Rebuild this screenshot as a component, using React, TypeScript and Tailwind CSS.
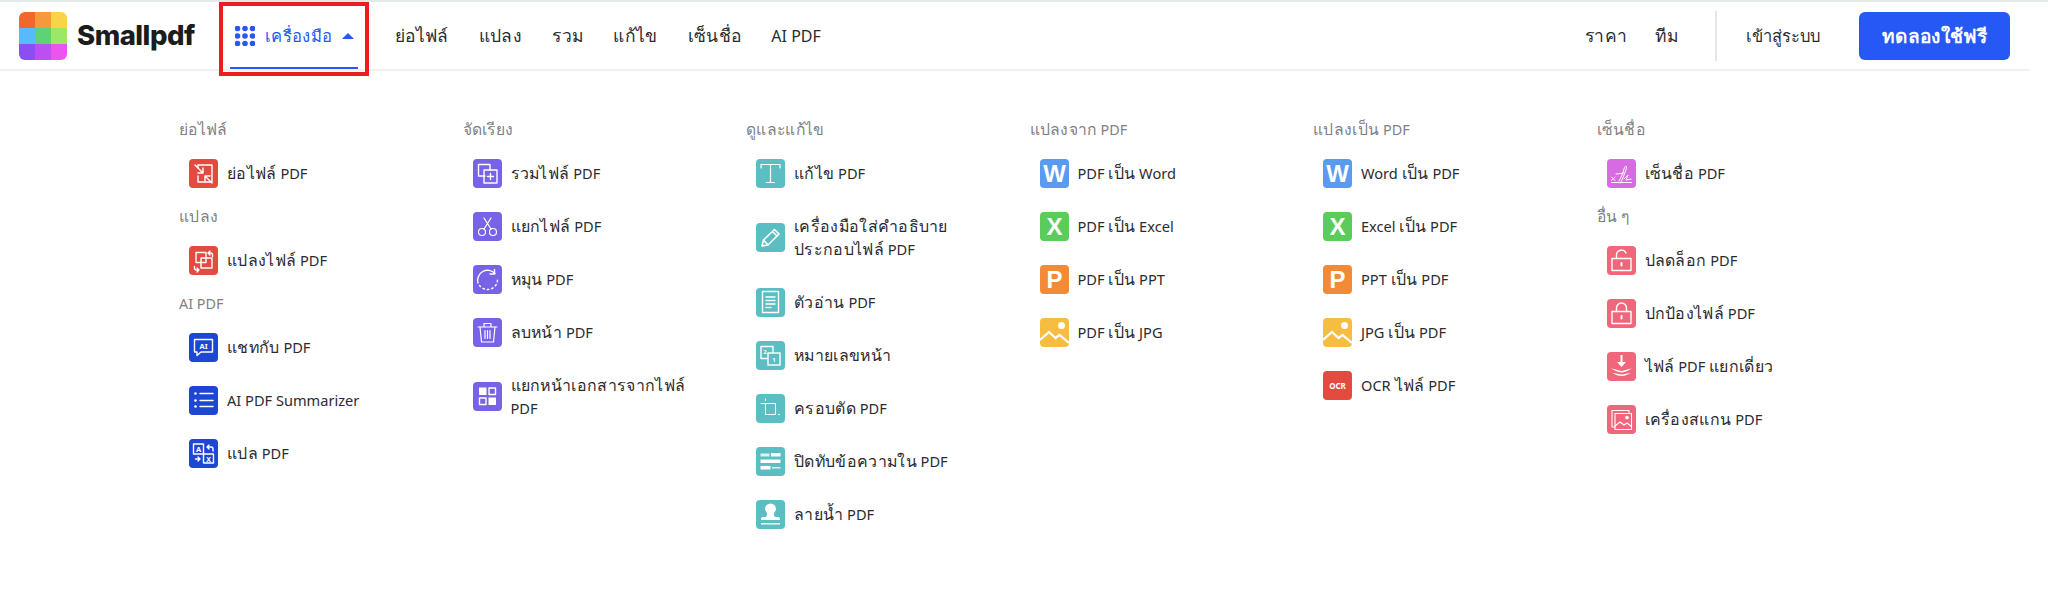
import React from "react";

const line = {
  fill: "none",
  stroke: "white",
  strokeWidth: 1.4,
  strokeLinecap: "round" as const,
  strokeLinejoin: "round" as const,
};

const glyphs: Record<string, React.ReactNode> = {
  compress: (
    <g {...line}>
      <path d="M9 6h14v17H13M9 6v3M9 17v6h4" />
      <path d="M6 6l8 8M14 9v5H9" />
      <path d="M23 24l-7-7M16 22v-5h5" />
    </g>
  ),
  convert: (
    <g {...line}>
      <rect x="7" y="6.5" width="10" height="10" />
      <rect x="12" y="12" width="11" height="10" />
      <path d="M19 7h2.5a2 2 0 012 2v1.5M21 5l-2 2 2 2" />
      <path d="M10 24H7.5a2 2 0 01-2-2v-1.5M8 22l2 2-2 2" />
    </g>
  ),
  chat: (
    <g>
      <path {...line} d="M5.5 6.5h18v12.5H12l-4 3.5V19H5.5z" />
      <text x="14.5" y="15.5" fontSize="7.5" fontWeight="700" fill="white" textAnchor="middle" fontFamily="Noto Sans">
        AI
      </text>
    </g>
  ),
  list: (
    <g>
      <path {...line} strokeWidth={1.5} d="M11 7.5h13M11 14.5h13M11 20.5h13" />
      <circle cx="6.5" cy="7.5" r="1.3" fill="white" />
      <circle cx="6.5" cy="14.5" r="1.3" fill="white" />
      <circle cx="6.5" cy="20.5" r="1.3" fill="white" />
    </g>
  ),
  translate: (
    <g>
      <rect {...line} x="4.5" y="5" width="10" height="10" />
      <rect {...line} x="14.5" y="15" width="10" height="9" />
      <text x="9.5" y="13" fontSize="7.5" fontWeight="700" fill="white" textAnchor="middle" fontFamily="Noto Sans">
        A
      </text>
      <text x="19.5" y="22.5" fontSize="7" fontWeight="700" fill="white" textAnchor="middle" fontFamily="Noto Sans">
        X
      </text>
      <path {...line} d="M18 8h4a2 2 0 012 2v2M20 6l-2 2 2 2" />
      <path {...line} d="M11 20H6.500M9 18l2 2-2 2" />
    </g>
  ),
  merge: (
    <g {...line}>
      <path d="M12 17H5.500V5.500H17V11" />
      <rect x="11" y="11" width="13" height="13" />
      <path d="M17.500 14.500v6M14.500 17.500h6" />
    </g>
  ),
  split: (
    <g {...line} strokeWidth={1.2}>
      <circle cx="9" cy="20" r="3.500" />
      <circle cx="20" cy="20" r="3.500" />
      <path d="M11 17L18 6M18 17L11 6" />
    </g>
  ),
  rotate: (
    <g {...line}>
      <path d="M22 8.500A10 10 0 005 18" />
      <path d="M21.500 4.500v4.500H17" />
      <path strokeDasharray="1.5 3" d="M6.500 20.500A10 10 0 0024.500 14" />
    </g>
  ),
  trash: (
    <g {...line} strokeWidth={1.2}>
      <path d="M5 9h19M11 9V5.500h7V9" />
      <path d="M7 9l1.500 15h12L22 9" />
      <path d="M12 12.500v8M14.500 12.500v8M17 12.500v8" />
    </g>
  ),
  pages: (
    <g>
      <rect x="6" y="5.500" width="7.500" height="7.500" fill="white" />
      <rect {...line} x="16" y="6" width="6.500" height="6.500" />
      <rect {...line} x="6.500" y="16" width="6.500" height="6.500" />
      <rect x="15.500" y="15.500" width="7.500" height="7.500" fill="white" />
    </g>
  ),
  text: (
    <g {...line} strokeWidth={1.2}>
      <path d="M5 9V5.500h19V9M14.500 5.500v18M10.500 23.500h8" />
    </g>
  ),
  pencil: (
    <g {...line} strokeWidth={1.6}>
      <path d="M6 23l1.500-6L18.500 6.500l4.500 4.500L12 22z" />
      <path d="M16.500 8.500l4.500 4.500M7.500 17l4.500 5" />
    </g>
  ),
  doc: (
    <g>
      <rect {...line} x="6.500" y="3.500" width="16" height="21" />
      <path {...line} d="M10 9h9M10 12.500h9M10 16h9M10 19.500h5" />
    </g>
  ),
  number: (
    <g>
      <rect {...line} x="5" y="5.500" width="12" height="12" />
      <rect x="12" y="12" width="12" height="12" fill="#5bbec3" stroke="white" strokeWidth="1.4" />
      <text x="9" y="12.500" fontSize="6" fontWeight="700" fill="white" textAnchor="middle" fontFamily="Noto Sans">
        2
      </text>
      <text x="18" y="21" fontSize="6" fontWeight="700" fill="white" textAnchor="middle" fontFamily="Noto Sans">
        1
      </text>
    </g>
  ),
  crop: (
    <g {...line} strokeWidth={1.1}>
      <path d="M9.500 9.500v11h10M9.500 5v1.500M5 9.500h14.500v11M22.500 20.500h1" />
    </g>
  ),
  redact: (
    <g>
      <rect x="4.500" y="6.500" width="9" height="3" fill="white" opacity="0.8" />
      <rect x="15" y="6" width="9.500" height="3.500" fill="white" />
      <rect x="4.500" y="12.500" width="20" height="3.500" fill="white" />
      <rect x="4.500" y="19" width="10" height="3.500" fill="white" />
      <rect x="16" y="20" width="8.500" height="1.500" fill="white" opacity="0.8" />
    </g>
  ),
  stamp: (
    <g fill="white">
      <path d="M14.500 3.500a5.500 5.500 0 00-5.500 5.500c0 2 1.800 3 2 4.500.2 1.200-.3 3-1.300 3.500H7a2 2 0 00-2 2v1h19v-1a2 2 0 00-2-2h-2.700c-1-.5-1.500-2.300-1.300-3.500.2-1.500 2-2.500 2-4.500a5.500 5.500 0 00-5.500-5.500z" />
      <rect x="5" y="23" width="19" height="1.500" />
    </g>
  ),
  w: (
    <text x="14.500" y="22.500" fontSize="24" fontWeight="700" fill="white" textAnchor="middle" fontFamily="Liberation Sans">
      W
    </text>
  ),
  x: (
    <text x="14.500" y="23" fontSize="24" fontWeight="700" fill="white" textAnchor="middle" fontFamily="Liberation Sans">
      X
    </text>
  ),
  p: (
    <text x="14.500" y="23" fontSize="24" fontWeight="700" fill="white" textAnchor="middle" fontFamily="Liberation Sans">
      P
    </text>
  ),
  image: (
    <g>
      <circle cx="21.500" cy="7.500" r="3.500" fill="white" />
      <path fill="none" stroke="white" strokeWidth="2.200" d="M0 22l9-8 6.500 6 4-3 9.500 8" />
    </g>
  ),
  ocr: (
    <text x="14.500" y="18" fontSize="8" fontWeight="700" fill="white" textAnchor="middle" fontFamily="Noto Sans">
      OCR
    </text>
  ),
  sign: (
    <g {...line} strokeWidth={1}>
      <path d="M4.500 18l3.500 3.500M8 18l-3.500 3.500" />
      <path d="M12 22c2-3 4-8 5-12 .6-2.500 2.500-4 2.500-2 0 3-4 12-6 16" />
      <path d="M9 15c3 0 6-1 8-1M17 20l4-4-2 5c2 0 4-1 5-1" />
      <path d="M4.500 23.500h20" />
    </g>
  ),
  unlock: (
    <g {...line}>
      <rect x="5" y="12.500" width="19" height="12" />
      <path d="M9.500 12.500V9a5 5 0 019.500-2" />
      <path d="M14.500 17v2.500" strokeWidth={2} />
    </g>
  ),
  lock: (
    <g {...line}>
      <rect x="5" y="12.500" width="19" height="12" />
      <path d="M9.500 12.500V9a5 5 0 0110 0v3.500" />
      <path d="M14.500 17v2.500" strokeWidth={2} />
    </g>
  ),
  flatten: (
    <g fill="white">
      <path d="M13.500 3h2v7h3.500l-4.500 5-4.500-5h3.500z" />
      <path d="M4 16.500c4 0 7 2.500 10.500 2.500S21 16.500 25 16.500c-3 1.500-6.500 4-10.500 4S7 18 4 16.500z" />
      <path d="M5 21c3.500 0 6.500 1.500 9.500 1.500S20.500 21 24 21c-3 1.300-6 3-9.500 3S8 22.300 5 21z" />
    </g>
  ),
  scan: (
    <g {...line} strokeWidth={1.1}>
      <path d="M8 22H5V5.500h17V8" />
      <rect x="8" y="8.500" width="16.500" height="16" />
      <circle cx="20" cy="12.500" r="1.300" fill="white" />
      <path d="M8 21l5-4 4 3 3-2 4.500 3.500" />
    </g>
  ),
};

type Tool = { label: string; icon: string; color: string };
type Group = { title: string; tools: Tool[] };

const RED = "bg-[#e34a40]";
const BLUE = "bg-[#1e46d2]";
const PURPLE = "bg-[#7862e8]";
const TEAL = "bg-[#5bbec3]";
const WORD = "bg-[#5a9bf2]";
const EXCEL = "bg-[#5bcc5c]";
const PPT = "bg-[#f38b36]";
const JPG = "bg-[#f6bd42]";
const SIGN = "bg-[#d76ce2]";
const PINK = "bg-[#f0667b]";

const columns: Group[][] = [
  [
    { title: "ย่อไฟล์", tools: [{ label: "ย่อไฟล์ PDF", icon: "compress", color: RED }] },
    { title: "แปลง", tools: [{ label: "แปลงไฟล์ PDF", icon: "convert", color: RED }] },
    {
      title: "AI PDF",
      tools: [
        { label: "แชทกับ PDF", icon: "chat", color: BLUE },
        { label: "AI PDF Summarizer", icon: "list", color: BLUE },
        { label: "แปล PDF", icon: "translate", color: BLUE },
      ],
    },
  ],
  [
    {
      title: "จัดเรียง",
      tools: [
        { label: "รวมไฟล์ PDF", icon: "merge", color: PURPLE },
        { label: "แยกไฟล์ PDF", icon: "split", color: PURPLE },
        { label: "หมุน PDF", icon: "rotate", color: PURPLE },
        { label: "ลบหน้า PDF", icon: "trash", color: PURPLE },
        { label: "แยกหน้าเอกสารจากไฟล์ PDF", icon: "pages", color: PURPLE },
      ],
    },
  ],
  [
    {
      title: "ดูและแก้ไข",
      tools: [
        { label: "แก้ไข PDF", icon: "text", color: TEAL },
        { label: "เครื่องมือใส่คำอธิบายประกอบไฟล์ PDF", icon: "pencil", color: TEAL },
        { label: "ตัวอ่าน PDF", icon: "doc", color: TEAL },
        { label: "หมายเลขหน้า", icon: "number", color: TEAL },
        { label: "ครอบตัด PDF", icon: "crop", color: TEAL },
        { label: "ปิดทับข้อความใน PDF", icon: "redact", color: TEAL },
        { label: "ลายน้ำ PDF", icon: "stamp", color: TEAL },
      ],
    },
  ],
  [
    {
      title: "แปลงจาก PDF",
      tools: [
        { label: "PDF เป็น Word", icon: "w", color: WORD },
        { label: "PDF เป็น Excel", icon: "x", color: EXCEL },
        { label: "PDF เป็น PPT", icon: "p", color: PPT },
        { label: "PDF เป็น JPG", icon: "image", color: JPG },
      ],
    },
  ],
  [
    {
      title: "แปลงเป็น PDF",
      tools: [
        { label: "Word เป็น PDF", icon: "w", color: WORD },
        { label: "Excel เป็น PDF", icon: "x", color: EXCEL },
        { label: "PPT เป็น PDF", icon: "p", color: PPT },
        { label: "JPG เป็น PDF", icon: "image", color: JPG },
        { label: "OCR ไฟล์ PDF", icon: "ocr", color: RED },
      ],
    },
  ],
  [
    { title: "เซ็นชื่อ", tools: [{ label: "เซ็นชื่อ PDF", icon: "sign", color: SIGN }] },
    {
      title: "อื่น ๆ",
      tools: [
        { label: "ปลดล็อก PDF", icon: "unlock", color: PINK },
        { label: "ปกป้องไฟล์ PDF", icon: "lock", color: PINK },
        { label: "ไฟล์ PDF แยกเดี่ยว", icon: "flatten", color: PINK },
        { label: "เครื่องสแกน PDF", icon: "scan", color: PINK },
      ],
    },
  ],
];

const logoCells = [
  "bg-[#f1672c]",
  "bg-[#f5993c]",
  "bg-[#fad448]",
  "bg-[#57bbfb]",
  "bg-[#5fd275]",
  "bg-[#9ce766]",
  "bg-[#8a4ff3]",
  "bg-[#bb4ff0]",
  "bg-[#ea55ee]",
];

const navlinks = ["ย่อไฟล์", "แปลง", "รวม", "แก้ไข", "เซ็นชื่อ", "AI PDF"];

// the Thai fallback font runs narrower than the one in the picture
const Mixed = ({ text }: { text: string }) => (
  <>
    {text.split(/([\u0E00-\u0E7F]+)/).map((part, i) =>
      /[\u0E00-\u0E7F]/.test(part) ? (
        <span key={i} className="text-[1.09em] leading-none tracking-[0.02em]">
          {part}
        </span>
      ) : (
        part
      )
    )}
  </>
);

const ToolRow = ({ tool }: { tool: Tool }) => (
  <div className="flex items-center gap-[9px] pl-[10px] pr-[30px] py-[12px]">
    <div className={`w-[29px] h-[29px] shrink-0 rounded-[4px] overflow-hidden ${tool.color}`}>
      <svg viewBox="0 0 29 29" className="w-full h-full block">
        {glyphs[tool.icon]}
      </svg>
    </div>
    <p className="max-w-[185px] py-[3px] text-[14.6px] leading-[23px] text-[#2b2b30]">
      <Mixed text={tool.label} />
    </p>
  </div>
);

const App = () => {
  return (
    <div className="relative w-[2048px] h-[591px] overflow-hidden bg-white font-['Noto_Sans',sans-serif] border-t-2 border-[#e4e9e7]">
      <div className="w-[2030px] h-[69px] pt-[1px] border-b-2 border-[#f1f1f1] flex items-center pl-[19px] pr-[20px]">
        <div className="w-[48px] h-[48px] rounded-[6px] overflow-hidden grid grid-cols-3 shrink-0">
          {logoCells.map((c, i) => (
            <div key={i} className={c} />
          ))}
        </div>
        <span className="ml-[10px] w-[142px] text-[27.5px] font-extrabold tracking-[-0.5px] text-[#1c1c1c] font-['Inter',sans-serif]">
          Smallpdf
        </span>

        <div className="relative flex items-center h-full w-[176px] pl-[16px] text-[#2558f5] text-[15.2px]">
          <svg viewBox="0 0 20 20" className="w-[20px] h-[20px] fill-[#2558f5] shrink-0">
            {[2.5, 10, 17.5].map((cy) =>
              [2.5, 10, 17.5].map((cx) => <circle key={`${cx}-${cy}`} cx={cx} cy={cy} r="2.8" />)
            )}
          </svg>
          <span className="ml-[10px]">
            <Mixed text="เครื่องมือ" />
          </span>
          <svg viewBox="0 0 12 6" className="ml-[10px] w-[12px] h-[6px] fill-[#2558f5]">
            <path d="M6 0l6 6H0z" />
          </svg>
          <div className="absolute left-[11px] bottom-0 w-[128px] h-[2px] bg-[#2558f5]" />
        </div>

        <div className="flex items-center gap-[30px] text-[16px] text-[#2b2b30]">
          {navlinks.map((item, i) => (
            <span key={i}>
              <Mixed text={item} />
            </span>
          ))}
        </div>

        <div className="ml-auto flex items-center text-[16px] text-[#2b2b30]">
          <span>
            <Mixed text="ราคา" />
          </span>
          <span className="ml-[28px]">
            <Mixed text="ทีม" />
          </span>
          <div className="ml-[37px] w-[2px] h-[50px] bg-[#e6e6e6]" />
          <span className="ml-[29px] text-[16.500px]">เข้าสู่ระบบ</span>
          <button className="ml-[39px] w-[151px] h-[48px] rounded-[6px] bg-[#2558f5] text-white font-bold text-[17.500px]">
            <Mixed text="ทดลองใช้ฟรี" />
          </button>
        </div>
      </div>

      <div className="flex pl-[179px] pt-[41.5px]">
        {columns.map((groups, c) => (
          <div key={c} className="w-[283.5px] shrink-0">
            {groups.map((g, i) => (
              <div key={i}>
                <h3 className="h-[34px] flex items-center text-[14.4px] text-[#7f7f85] font-normal">
                  <span>
                    <Mixed text={g.title} />
                  </span>
                </h3>
                {g.tools.map((t, j) => (
                  <ToolRow key={j} tool={t} />
                ))}
              </div>
            ))}
          </div>
        ))}
      </div>

      {/* red highlight box drawn on top of the screenshot */}
      <div className="absolute left-[219px] top-0 w-[150px] h-[74px] border-4 border-[#ed1c24] pointer-events-none" />
    </div>
  );
};

export default App;
